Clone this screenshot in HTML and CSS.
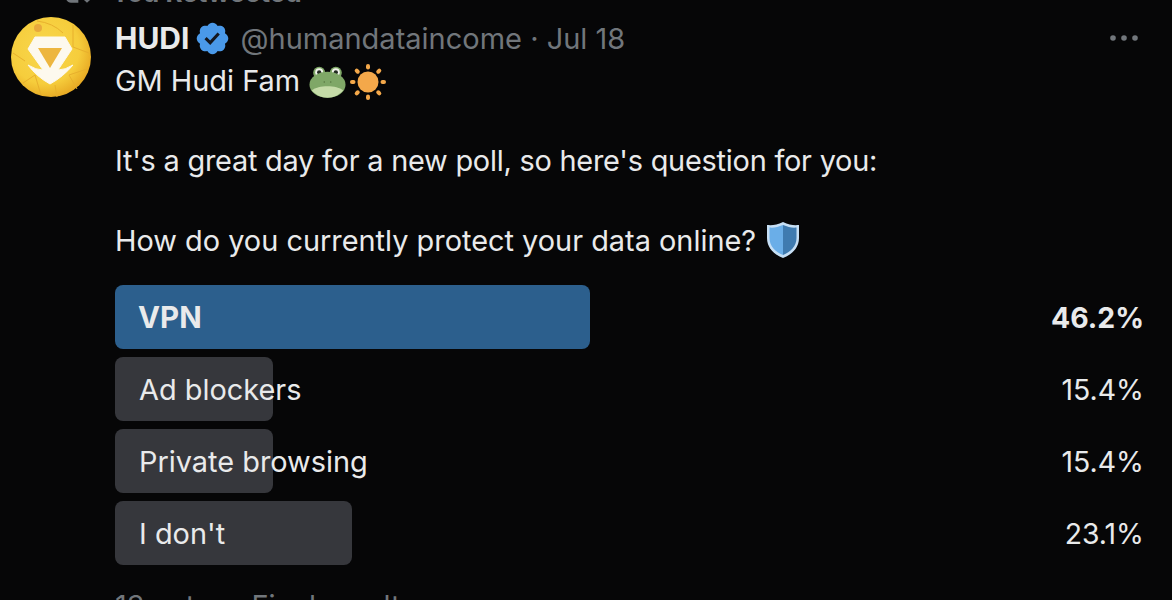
FILE: index.html
```html
<!DOCTYPE html>
<html lang="en">
<head>
<meta charset="utf-8">
<title>HUDI poll</title>
<link rel="stylesheet" href="styles.css">
</head>
<body>
<main class="tweet">
  <div class="context">
    <svg class="context-icon" viewBox="0 0 24 24"><path d="M4.5 3.88l4.432 4.14-1.364 1.46L5.5 7.55V16c0 1.1.896 2 2 2H13v2H7.5c-2.209 0-4-1.79-4-4V7.55L1.432 9.48.068 8.02 4.5 3.88zM16.5 6H11V4h5.500c2.209 0 4 1.790 4 4v8.450l2.068-1.930 1.364 1.460-4.432 4.140-4.432-4.140 1.364-1.460 2.068 1.930V8c0-1.100-.896-2-2-2z"/></svg>
    <span>You Retweeted</span>
  </div>
  <div class="body">
    <svg class="avatar" viewBox="0 0 80 80">
      <defs>
        <radialGradient id="gold" cx="42%" cy="40%" r="62%">
          <stop offset="0" stop-color="#f8d74d"/>
          <stop offset="0.7" stop-color="#f6cd3c"/>
          <stop offset="1" stop-color="#e8aa24"/>
        </radialGradient>
      </defs>
      <circle cx="40" cy="40" r="40" fill="url(#gold)"/>
      <path d="M26 4 Q42 6 52 16 M62 8 L62 30 L78 36 M66 72 L58 58 L76 52 M12 66 L24 58 L30 78 M2 36 L14 44 M44 68 L46 80" fill="none" stroke="#e8b02d" stroke-width="1"/>
      <circle cx="27" cy="11" r="4" fill="#e8a93c"/>
      <path d="M24 20H54L61 32 47 53Q54 53 62 48 52 60 39 67 26 60 17 48 25 53 32 53L17 32Z" fill="#fdf9ee" stroke="#fdf9ee" stroke-width="1" stroke-linejoin="round"/>
      <path d="M27 31H51L39 51Z" fill="#edb63f"/>
    </svg>
    <div class="content">
      <header class="head">
        <strong class="name">HUDI</strong>
        <svg class="badge" viewBox="0 0 22 22"><path fill="#4a99e9" d="M20.396 11c-.018-.646-.215-1.275-.57-1.816-.354-.54-.852-.972-1.438-1.246.223-.607.27-1.264.14-1.897-.131-.634-.437-1.218-.882-1.687-.47-.445-1.053-.75-1.687-.882-.633-.13-1.29-.083-1.897.14-.273-.587-.704-1.086-1.245-1.44S11.647 1.62 11 1.604c-.646.017-1.273.213-1.813.568s-.969.854-1.24 1.44c-.608-.223-1.267-.272-1.902-.14-.635.13-1.22.436-1.69.882-.445.47-.749 1.055-.878 1.688-.13.633-.08 1.29.144 1.896-.587.274-1.087.705-1.443 1.245-.356.54-.555 1.17-.574 1.817.02.647.218 1.276.574 1.817.356.54.856.972 1.443 1.245-.224.606-.274 1.263-.144 1.896.13.634.433 1.218.877 1.688.47.443 1.054.747 1.687.878.633.132 1.29.084 1.897-.136.274.586.705 1.084 1.246 1.439.54.354 1.17.551 1.816.569.647-.016 1.276-.213 1.817-.567s.972-.854 1.245-1.44c.604.239 1.266.296 1.903.164.636-.132 1.22-.447 1.68-.907.46-.46.776-1.044.908-1.681s.075-1.299-.165-1.903c.586-.274 1.084-.705 1.439-1.246.354-.54.551-1.17.569-1.816z"/><path fill="#14171f" d="M9.662 14.85l-3.429-3.428 1.293-1.302 2.072 2.072 4.4-4.794 1.347 1.246z"/></svg>
        <span class="meta">@humandataincome · Jul 18</span>
        <svg class="more" viewBox="0 0 30 8"><circle cx="4" cy="4" r="2.800"/><circle cx="15" cy="4" r="2.800"/><circle cx="26" cy="4" r="2.800"/></svg>
      </header>
      <p class="line">GM Hudi Fam
        <svg class="emoji emoji-frog" viewBox="0 0 40 34"><circle cx="11" cy="7" r="6.500" fill="#7fa767"/><circle cx="29" cy="7" r="6.500" fill="#7fa767"/><circle cx="11" cy="6.500" r="4.300" fill="#f2f4ec"/><circle cx="29" cy="6.500" r="4.300" fill="#f2f4ec"/><circle cx="11" cy="6.500" r="2.300" fill="#222a22"/><circle cx="29" cy="6.500" r="2.300" fill="#222a22"/><ellipse cx="20" cy="20" rx="19.500" ry="14" fill="#7fa767"/><path d="M3 26C10 20 30 20 37 26 33 31 27 34 20 34S7 31 3 26Z" fill="#c5dba8"/><circle cx="16.500" cy="17" r=".8" fill="#54733f"/><circle cx="23.500" cy="17" r=".8" fill="#54733f"/></svg><svg class="emoji emoji-sun" viewBox="0 0 36 36"><g fill="#f4a84a"><circle cx="18" cy="18" r="10.500"/><rect x="16" y="0" width="4" height="5.500" rx="2"/><rect x="16" y="30.500" width="4" height="5.500" rx="2"/><rect x="0" y="16" width="5.500" height="4" rx="2"/><rect x="30.500" y="16" width="5.500" height="4" rx="2"/><rect x="16" y="0" width="4" height="5.500" rx="2" transform="rotate(45 18 18)"/><rect x="16" y="0" width="4" height="5.500" rx="2" transform="rotate(135 18 18)"/><rect x="16" y="0" width="4" height="5.500" rx="2" transform="rotate(225 18 18)"/><rect x="16" y="0" width="4" height="5.500" rx="2" transform="rotate(315 18 18)"/></g></svg>
      </p>
      <p class="line line-gap line-tight">It's a great day for a new poll, so here's question for you:</p>
      <p class="line line-gap">How do you currently protect your data online?
        <svg class="emoji emoji-shield" viewBox="0 0 32 36"><path d="M16 0C22 3 27 3.500 32 3V16C32 26 25 32.500 16 36 7 32.500 0 26 0 16V3C5 3.500 10 3 16 0Z" fill="#c6dff5"/><path d="M16 3C11 5 7 6 2.500 5.500V16C2.500 24.500 8.500 30 16 33Z" fill="#6aaee8"/><path d="M16 3C21 5 25 6 29.500 5.500V16C29.500 24.500 23.500 30 16 33Z" fill="#3f7bb0"/></svg>
      </p>
      <section class="poll">
        <div class="option option-win"><div class="bar bar-win" style="width:475px"></div><span class="label label-win">VPN</span><span class="pct">46.2%</span></div>
        <div class="option"><div class="bar" style="width:158px"></div><span class="label">Ad blockers</span><span class="pct">15.4%</span></div>
        <div class="option"><div class="bar" style="width:158px"></div><span class="label">Private browsing</span><span class="pct">15.4%</span></div>
        <div class="option"><div class="bar" style="width:237px"></div><span class="label">I don't</span><span class="pct">23.1%</span></div>
      </section>
      <p class="votes">13 votes · Final results</p>
    </div>
  </div>
</main>
</body>
</html>
```
FILE: styles.css
```css
html, body {
  margin: 0;
  height: 600px;
  overflow: hidden;
  background: #060607;
}
body {
  font-family: Inter, "Liberation Sans", sans-serif;
  color: #e9eaeb;
  font-size: 28.900px;
}
.tweet {
  margin-top: -24px;
  padding-left: 11px;
  padding-right: 28px;
}
.context {
  display: flex;
  align-items: center;
  gap: 18px;
  height: 32px;
  padding-left: 50px;
  color: #70757a;
  font-size: 26px;
  font-weight: 700;
}
.context-icon {
  width: 32px;
  height: 32px;
  fill: #70757a;
}
.body {
  display: flex;
  gap: 24px;
  padding-top: 9px;
}
.avatar {
  width: 80px;
  height: 80px;
  flex: none;
}
.content {
  flex: 1;
  min-width: 0;
}
.head {
  display: flex;
  align-items: center;
  height: 42px;
  margin-bottom: 2px;
}
.name {
  font-weight: 700;
  font-size: 30px;
}
.badge {
  width: 37px;
  height: 37px;
  margin-left: 5px;
  margin-right: 9px;
}
.meta {
  color: #71767b;
  flex: 1;
  font-size: 29px;
}
.more {
  width: 30px;
  height: 8px;
  fill: #71767b;
  margin-right: 5px;
}
.line {
  margin: 0;
  line-height: 40px;
  height: 40px;
  white-space: nowrap;
}
.line-gap {
  margin-top: 40px;
}
.line-tight {
  letter-spacing: -0.23px;
}
.emoji {
  display: inline-block;
  vertical-align: -7px;
}
.emoji-frog {
  width: 37px;
  height: 32px;
  margin-left: 1px;
}
.emoji-sun {
  width: 36px;
  height: 36px;
  margin-left: 4px;
  vertical-align: -9px;
}
.emoji-shield {
  width: 32px;
  height: 36px;
  margin-left: 3px;
}
.poll {
  display: flex;
  flex-direction: column;
  gap: 8px;
  margin-top: 24px;
}
.option {
  position: relative;
  display: flex;
  justify-content: space-between;
  align-items: center;
  height: 64px;
}
.bar {
  position: absolute;
  left: 0;
  top: 0;
  bottom: 0;
  background: #36373c;
  border-radius: 8px;
}
.bar-win {
  background: #2c5f8d;
}
.label, .pct {
  position: relative;
}
.label {
  padding-left: 24px;
}
.label-win {
  padding-left: 23px;
  font-size: 29.500px;
}
.pct {
  font-size: 28.400px;
}
.option-win {
  font-weight: 700;
}
.votes {
  margin: 21px 0 0;
  color: #71767b;
  line-height: 40px;
}
```
